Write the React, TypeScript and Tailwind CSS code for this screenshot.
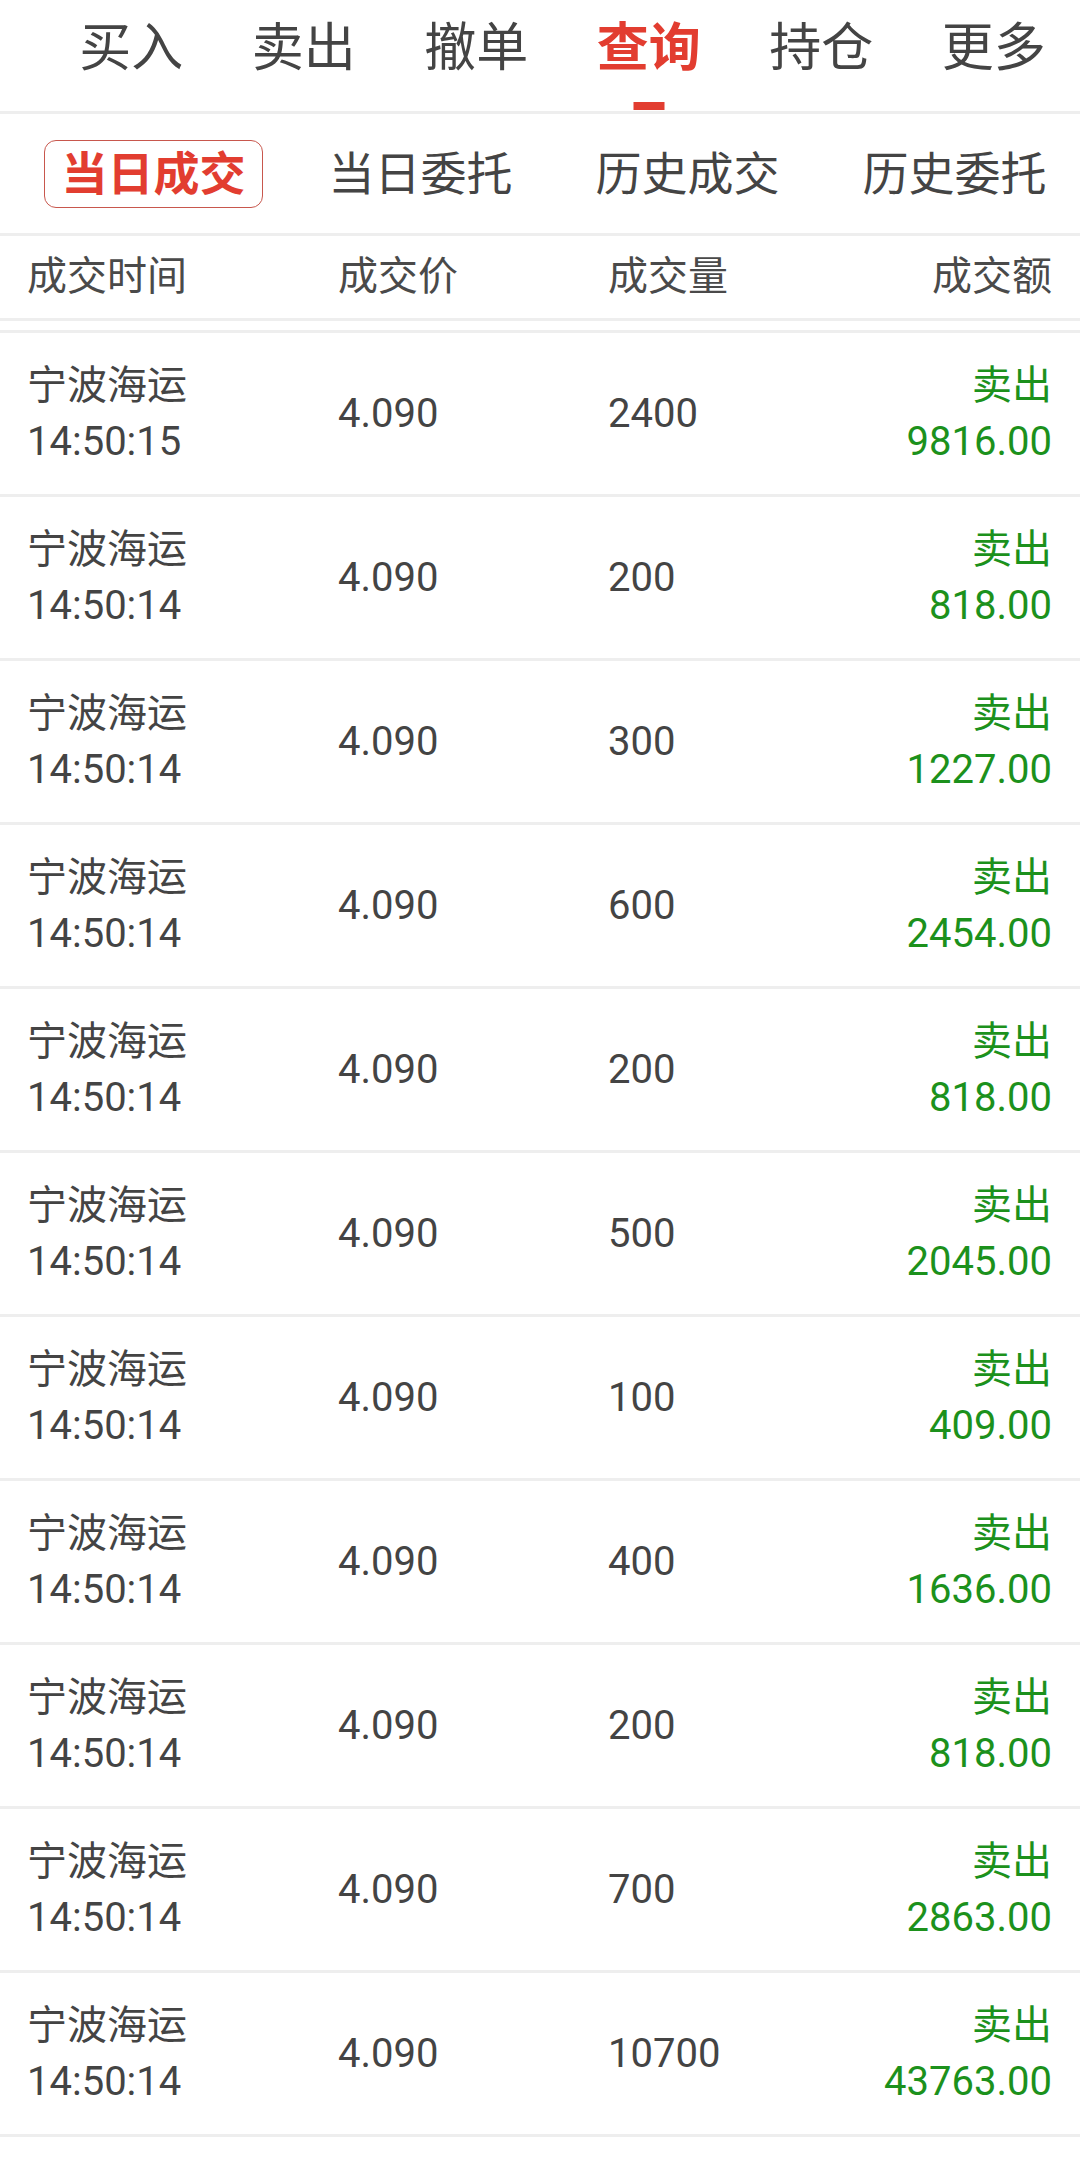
import React from "react";

const rows: { t: string; q: string; a: string }[] = [
  { t: "14:50:15", q: "2400", a: "9816.00" },
  { t: "14:50:14", q: "200", a: "818.00" },
  { t: "14:50:14", q: "300", a: "1227.00" },
  { t: "14:50:14", q: "600", a: "2454.00" },
  { t: "14:50:14", q: "200", a: "818.00" },
  { t: "14:50:14", q: "500", a: "2045.00" },
  { t: "14:50:14", q: "100", a: "409.00" },
  { t: "14:50:14", q: "400", a: "1636.00" },
  { t: "14:50:14", q: "200", a: "818.00" },
  { t: "14:50:14", q: "700", a: "2863.00" },
  { t: "14:50:14", q: "10700", a: "43763.00" },
];

const topTabs = ["买入", "卖出", "撤单", "查询", "持仓", "更多"];
const subTabs = ["当日成交", "当日委托", "历史成交", "历史委托"];

export default function App() {
  return (
    <div className="w-[1080px] min-h-[2166px] bg-white font-['Roboto','Noto_Sans_CJK_SC',sans-serif] text-[#444444]">
      {/* top tabs */}
      <div className="h-[114px] border-b-[3px] border-[#eeeeee] flex pl-[45px]">
        {topTabs.map((t, i) => (
          <div key={t} className="flex-1 relative flex justify-center">
            <span
              className={
                "mt-[18px] text-[52px] leading-[62px] " +
                (i === 3 ? "text-[#e23d30] font-bold" : "text-[#444444]")
              }
            >
              {t}
            </span>
            {i === 3 && (
              <div className="absolute top-[102px] left-1/2 -translate-x-1/2 w-[31px] h-[8px] bg-[#e23d30]" />
            )}
          </div>
        ))}
      </div>

      {/* sub tabs */}
      <div className="h-[122px] border-b-[3px] border-[#eeeeee] flex items-center pl-[44px] gap-[48px]">
        {subTabs.map((t, i) => (
          <div
            key={t}
            className={
              "w-[219px] h-[68px] flex items-center justify-center text-[46px] leading-none rounded-[12px] " +
              (i === 0
                ? "border border-[#c8574d] text-[#e23d30] font-bold"
                : "border border-transparent text-[#444444]")
            }
          >
            {t}
          </div>
        ))}
      </div>

      {/* header */}
      <div className="h-[85px] border-b-[3px] border-[#eeeeee] flex items-center pl-[27px] pr-[28px] text-[40px] text-[#4a4a4a]">
        <div className="w-[311px]">成交时间</div>
        <div className="w-[270px]">成交价</div>
        <div className="flex-1">成交量</div>
        <div className="text-right">成交额</div>
      </div>

      <div className="h-[9px]" />

      {/* list */}
      <div className="border-t-[3px] border-[#eeeeee]">
        {rows.map((r, i) => (
          <div
            key={i}
            className="h-[164px] border-b-[3px] border-[#eeeeee] flex items-center pl-[27px] pr-[28px] text-[40px]"
          >
            <div className="w-[311px] flex flex-col leading-[56px]">
              <span>宁波海运</span>
              <span>{r.t}</span>
            </div>
            <div className="w-[270px]">4.090</div>
            <div className="flex-1">{r.q}</div>
            <div className="flex flex-col items-end leading-[56px] text-[#1c911c]">
              <span>卖出</span>
              <span>{r.a}</span>
            </div>
          </div>
        ))}
      </div>
    </div>
  );
}
